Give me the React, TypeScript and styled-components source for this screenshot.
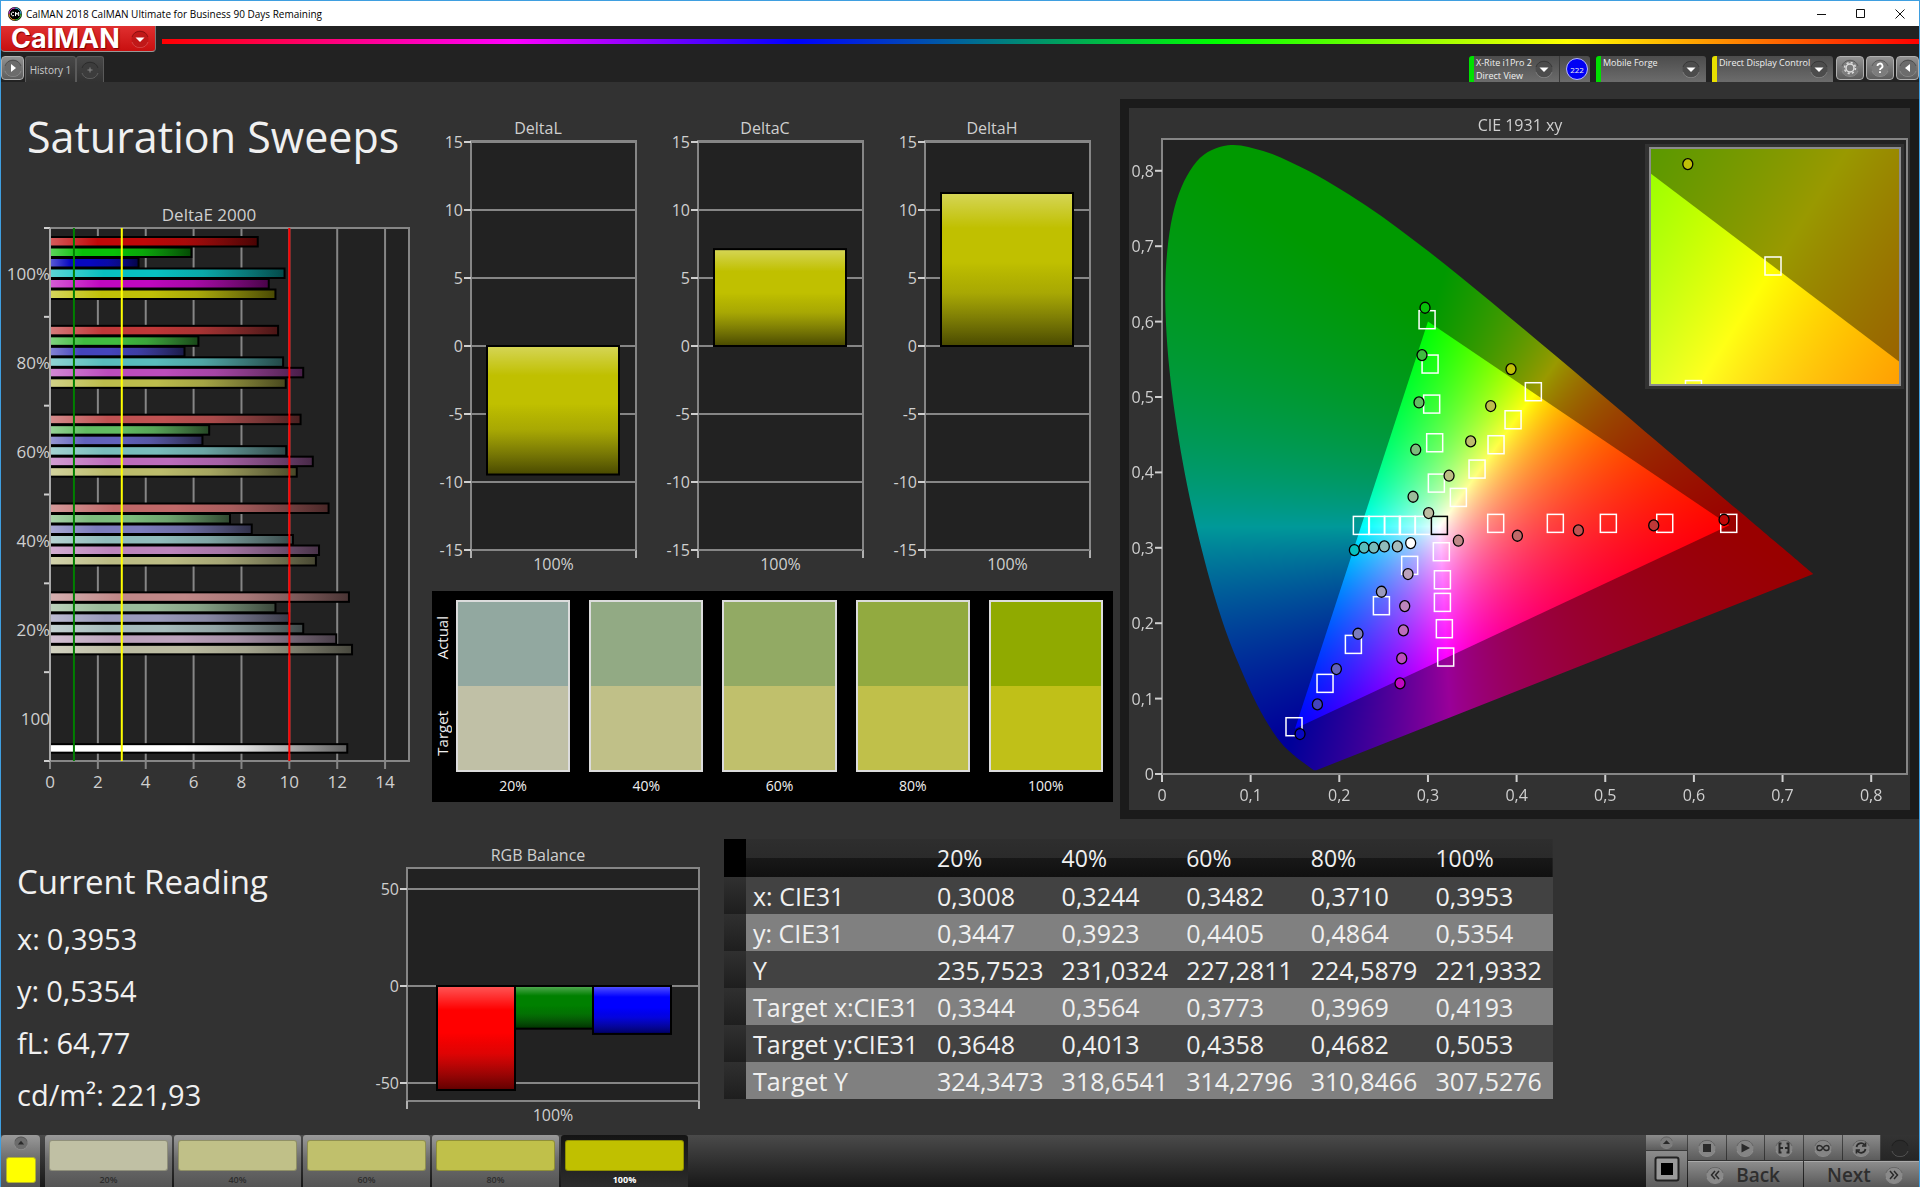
import React, { useLayoutEffect, useRef } from 'react';
import styled, { createGlobalStyle } from 'styled-components';

/* ---------- data ---------- */

const levels = ['20%', '40%', '60%', '80%', '100%'];

const deltaE = [
  { label: '100%', values: [8.68, 5.91, 3.7, 9.8, 9.14, 9.42], colors: ['#c00808', '#08c008', '#0808c0', '#08c0c0', '#c008c0', '#c0c008'] },
  { label: '80%', values: [9.53, 6.2, 5.62, 9.74, 10.58, 9.85], colors: ['#c03838', '#40bc40', '#4444bc', '#58bcbc', '#bc4cbc', '#bcbc4c'] },
  { label: '60%', values: [10.47, 6.65, 6.37, 9.87, 10.98, 10.31], colors: ['#c05252', '#62bc62', '#6262bc', '#78bcbc', '#bc6cbc', '#bcbc6c'] },
  { label: '40%', values: [11.64, 7.52, 8.43, 10.15, 11.24, 11.11], colors: ['#c06868', '#7cbc7c', '#7c7cbc', '#90bcbc', '#bc84bc', '#bcbc84'] },
  { label: '20%', values: [12.49, 9.42, 9.99, 10.58, 11.96, 12.62], colors: ['#c08888', '#9abc9a', '#9a9abc', '#a6bcbc', '#bca2bc', '#bcbca2'] },
];

const swatches = [
  { actual: '#92a8a0', target: '#c0c0a6' },
  { actual: '#92aa84', target: '#c0c088' },
  { actual: '#92aa64', target: '#c0c06c' },
  { actual: '#92aa40', target: '#c0c04a' },
  { actual: '#90aa00', target: '#c0c018' },
];

const patternColors = ['#c0c0a4', '#c0c088', '#c0c06c', '#c0c04a', '#c0c000'];

const tableRows = [
  ['x: CIE31', '0,3008', '0,3244', '0,3482', '0,3710', '0,3953'],
  ['y: CIE31', '0,3447', '0,3923', '0,4405', '0,4864', '0,5354'],
  ['Y', '235,7523', '231,0324', '227,2811', '224,5879', '221,9332'],
  ['Target x:CIE31', '0,3344', '0,3564', '0,3773', '0,3969', '0,4193'],
  ['Target y:CIE31', '0,3648', '0,4013', '0,4358', '0,4682', '0,5053'],
  ['Target Y', '324,3473', '318,6541', '314,2796', '310,8466', '307,5276'],
];

const readings = [
  ['x:', '0,3953'],
  ['y:', '0,5354'],
  ['fL:', '64,77'],
  ['cd/m²:', '221,93'],
];

type Point = [number, number];

const locus: Point[] = [
  [0.1741, 0.005], [0.1714, 0.0051], [0.1689, 0.0069], [0.1644, 0.0109], [0.1566, 0.0177],
  [0.151, 0.0227], [0.144, 0.0297], [0.1355, 0.0399], [0.1241, 0.0578], [0.1096, 0.0868],
  [0.0913, 0.1327], [0.0687, 0.2007], [0.0454, 0.295], [0.0235, 0.4127], [0.0082, 0.5384],
  [0.0039, 0.6548], [0.0139, 0.7502], [0.0389, 0.812], [0.0743, 0.8338], [0.1142, 0.8262],
  [0.1547, 0.8059], [0.1929, 0.7816], [0.2296, 0.7543], [0.2658, 0.7243], [0.3016, 0.6923],
  [0.3373, 0.6589], [0.3731, 0.6245], [0.4087, 0.5896], [0.4441, 0.5547], [0.4788, 0.5202],
  [0.5125, 0.4866], [0.5448, 0.4544], [0.5752, 0.4242], [0.6029, 0.3965], [0.627, 0.3725],
  [0.6482, 0.3514], [0.6658, 0.334], [0.6915, 0.3083], [0.7079, 0.292], [0.719, 0.2809],
  [0.726, 0.274], [0.7347, 0.2653],
];

const gamut: Point[] = [[0.64, 0.33], [0.3, 0.6], [0.15, 0.06]];

const targets: Point[] = [
  [0.299, 0.6025], [0.3024, 0.5437], [0.3042, 0.4906], [0.3076, 0.4393], [0.3095, 0.3858],
  [0.4189, 0.507], [0.396, 0.4698], [0.3768, 0.4367], [0.3554, 0.4044], [0.3343, 0.3668],
  [0.3764, 0.3324], [0.4437, 0.3324], [0.5035, 0.3324], [0.5671, 0.3324], [0.6393, 0.3324],
  [0.2249, 0.3297], [0.2422, 0.3297], [0.2599, 0.3297], [0.2768, 0.3297], [0.2945, 0.3297],
  [0.3151, 0.2948], [0.3163, 0.2576], [0.3163, 0.2276], [0.3185, 0.1927], [0.32, 0.1551],
  [0.2794, 0.2767], [0.2475, 0.2232], [0.2159, 0.1719], [0.1839, 0.1202], [0.1489, 0.0627],
];

const measured: { color: string; at: Point }[] = [
  { color: '#08c008', at: [0.2967, 0.6184] },
  { color: '#40bc40', at: [0.2933, 0.5556] },
  { color: '#62bc62', at: [0.2899, 0.4928] },
  { color: '#7cbc7c', at: [0.2862, 0.4301] },
  { color: '#9abc9a', at: [0.2832, 0.3677] },
  { color: '#c0c008', at: [0.3937, 0.537] },
  { color: '#bcbc4c', at: [0.3708, 0.488] },
  { color: '#bcbc6c', at: [0.3482, 0.4411] },
  { color: '#bcbc84', at: [0.3238, 0.3956] },
  { color: '#bcbca2', at: [0.3008, 0.3461] },
  { color: '#c08888', at: [0.3343, 0.3094] },
  { color: '#c06868', at: [0.4009, 0.316] },
  { color: '#c05252', at: [0.4697, 0.3231] },
  { color: '#c03838', at: [0.5547, 0.3297] },
  { color: '#c00808', at: [0.634, 0.3372] },
  { color: '#08c0c0', at: [0.217, 0.297] },
  { color: '#58bcbc', at: [0.2279, 0.3001] },
  { color: '#78bcbc', at: [0.2388, 0.3001] },
  { color: '#90bcbc', at: [0.2508, 0.3018] },
  { color: '#a6bcbc', at: [0.2655, 0.3018] },
  { color: '#ffffff', at: [0.2805, 0.3063] },
  { color: '#bca2bc', at: [0.2775, 0.2652] },
  { color: '#bc84bc', at: [0.2738, 0.2227] },
  { color: '#bc6cbc', at: [0.2723, 0.1905] },
  { color: '#bc4cbc', at: [0.2704, 0.1533] },
  { color: '#c008c0', at: [0.2685, 0.1202] },
  { color: '#9a9abc', at: [0.2475, 0.2417] },
  { color: '#7c7cbc', at: [0.2211, 0.186] },
  { color: '#6262bc', at: [0.1967, 0.1392] },
  { color: '#4444bc', at: [0.1753, 0.0923] },
  { color: '#0808c0', at: [0.1557, 0.053] },
];

/* ---------- shared look ---------- */

const ui = '"Open Sans", "Noto Sans", sans-serif';

const GlobalStyle = createGlobalStyle`
  * { box-sizing: border-box; }
  body { margin: 0; background: #323232; }
  button { font-family: inherit; padding: 0; margin: 0; border: 0; cursor: pointer; }
  h1, h2, dl, dd, dt { margin: 0; font-weight: 400; }
`;

const Window = styled.div`
  display: flex;
  flex-direction: column;
  min-height: 100vh;
  border: 1px solid #3f9fe0;
  border-bottom: 0;
  font-family: ${ui};
  color: #f0f0f0;
  background: #323232;
`;

/* ---------- title bar and header ---------- */

const TitleBar = styled.header`
  display: flex;
  align-items: center;
  height: 25px;
  padding-left: 7px;
  background: #fff;
  color: #000;
  font-size: 10px;
`;

const WindowTitle = styled.span`
  flex: 1;
  padding-left: 4px;
`;

const WindowButton = styled.button`
  display: grid;
  place-items: center;
  width: 39px;
  height: 24px;
  background: none;
  color: #111;
`;

const Header = styled.div`
  height: 56px;
  background: #222;
`;

const BrandRow = styled.div`
  display: flex;
  align-items: center;
  gap: 6px;
  height: 26px;
`;

const Brand = styled.button`
  display: flex;
  align-items: center;
  justify-content: space-between;
  width: 155px;
  height: 26px;
  padding: 0 6px 0 10px;
  border-radius: 0 0 4px 4px;
  border-bottom: 1px solid #999;
  border-right: 1px solid #777;
  background: linear-gradient(#e03030, #c80f0f);
  color: #fff;
  font: 700 27px/24px Inter, sans-serif;
  text-shadow: 1px 1px 1px #7a0000;
`;

const Rainbow = styled.div`
  flex: 1;
  height: 5px;
  margin-top: 4px;
  background: linear-gradient(90deg, #f00, #f0f 20%, #00f 36%, #0f0 60%, #ff0 80%, #f00);
`;

const TabRow = styled.div`
  display: flex;
  align-items: flex-end;
  justify-content: space-between;
  height: 30px;
`;

const TabGroup = styled.div`
  display: flex;
  align-items: stretch;
  height: 26px;
  gap: 1px;
`;

const Tab = styled.button<{ $width: number }>`
  width: ${(p) => p.$width}px;
  border: 1px solid #5a5a5a;
  border-bottom: 0;
  border-radius: 3px 3px 0 0;
  background: linear-gradient(#484848, #323232);
  color: #ccc;
  font-size: 10px;
  display: grid;
  place-items: center;
`;

const TabPair = styled.div`
  display: flex;
`;

const SquareButton = styled.button`
  display: grid;
  place-items: center;
  width: 28px;
  height: 24px;
  border: 1px solid #b0b0b0;
  border-radius: 4px;
  background: linear-gradient(#929292, #5c5c5c);
`;

const EdgeButton = styled(SquareButton)`
  width: 23px;
`;

const DeviceGroup = styled.div`
  display: flex;
  height: 26px;
  gap: 6px;
`;

const DeviceBar = styled.div`
  display: flex;
  align-items: flex-start;
  gap: 3px;
`;

const Device = styled.div<{ $width: number; $status: string }>`
  display: flex;
  width: ${(p) => p.$width}px;
  height: 26px;
  border-left: 5px solid ${(p) => p.$status};
  border-radius: 3px 3px 0 0;
  background: linear-gradient(#4c4c4c, #6c6c6c);
`;

const DeviceMenu = styled.button`
  display: flex;
  flex: 1;
  align-items: flex-start;
  justify-content: space-between;
  padding: 0 6px 0 2px;
  background: none;
  color: #f0f0f0;
  font-size: 9px;
  line-height: 13px;
  text-align: left;
  white-space: nowrap;
`;

const DropIcon = styled.svg`
  flex: none;
  align-self: center;
`;

const Counter = styled.span`
  display: grid;
  place-items: center;
  align-self: center;
  width: 22px;
  height: 22px;
  margin: 0 2px 0 6px;
  border: 1px solid #b8b8ff;
  border-radius: 50%;
  background: #0000f4;
  font-size: 8px;
`;

const CounterCell = styled.span`
  display: flex;
  border-left: 1px solid #3a3a3a;
`;

const ToolGroup = styled.div`
  display: flex;
  gap: 2px;
`;

/* ---------- workspace ---------- */

const Workspace = styled.main`
  flex: 1;
`;

const TopRow = styled.section`
  display: grid;
  grid-template-columns: 431fr 688fr 799fr;
  align-items: start;
`;

const BottomRow = styled.section`
  display: grid;
  grid-template-columns: 365fr 350fr 829fr 374fr;
  align-items: start;
  padding-top: 20px;
`;

const SweepColumn = styled.div`
  padding-top: 25px;
`;

const PageTitle = styled.h1`
  padding-left: 26px;
  margin-bottom: 33px;
  font-size: 43px;
  line-height: 60px;
`;

const DeltaColumn = styled.div`
  display: flex;
  flex-direction: column;
  gap: 9px;
  padding: 30px 7px 0 0;
`;

const DeltaCharts = styled.div`
  display: grid;
  grid-template-columns: repeat(3, 1fr);
`;

const Chart = styled.svg<{ $text?: number }>`
  display: block;
  width: 100%;
  height: auto;
  font-family: ${ui};
  font-size: ${(p) => p.$text ?? 16}px;
`;

const SwatchPanel = styled.div`
  display: grid;
  grid-template-columns: 24px 1fr;
  padding: 9px 10px 6px 0;
  background: #000;
`;

const SwatchSides = styled.div`
  display: flex;
  flex-direction: column;
  justify-content: space-between;
  align-items: flex-start;
  height: 172px;
  padding: 16px 0;
`;

const SideLabel = styled.span`
  writing-mode: vertical-rl;
  transform: rotate(180deg);
  font-size: 15px;
  line-height: 20px;
`;

const SwatchList = styled.div`
  display: grid;
  grid-template-columns: repeat(5, 1fr);
  gap: 19px;
`;

const SwatchItem = styled.div`
  display: flex;
  flex-direction: column;
  gap: 4px;
  font-size: 14px;
  line-height: 20px;
  text-align: center;
`;

const SwatchBox = styled.div<{ $actual: string; $target: string }>`
  height: 172px;
  border: 2px solid #dcdcdc;
  background: linear-gradient(${(p) => p.$actual} 50%, ${(p) => p.$target} 50%);
`;

const CiePanel = styled.div`
  display: grid;
  margin-top: 17px;
  border: 9px solid #1b1b1b;

  > * {
    grid-area: 1 / 1;
  }
`;

const CieCanvas = styled.canvas`
  display: block;
  width: 100%;
  height: auto;
`;

const CieOverlay = styled(Chart)`
  z-index: 1;
`;

/* ---------- readings and table ---------- */

const ReadingPanel = styled.div`
  padding: 21px 0 0 16px;
`;

const ReadingTitle = styled.h2`
  margin-bottom: 9px;
  font-size: 33px;
  line-height: 44px;
`;

const ReadingLine = styled.div`
  display: flex;
  gap: 7px;
  font-size: 29px;
  line-height: 52px;
`;

const ReadingTableWrap = styled.div`
  padding-left: 8px;
  margin-right: -8px;
`;

const ReadingTable = styled.table`
  width: 100%;
  table-layout: fixed;
  border-collapse: collapse;
  font-size: 25px;
  line-height: 36px;
  text-align: left;
  white-space: nowrap;

  th,
  td {
    padding: 0 0 0 7px;
    font-weight: 400;
  }
`;

const HandleCol = styled.col`
  width: 22px;
`;

const LabelCol = styled.col`
  width: 184px;
`;

const HeadRow = styled.tr`
  height: 38px;
  font-size: 23px;
  background: linear-gradient(#2e2e2e 0, #2a2a2a 50%, #181818 50%, #101010 100%);
`;

const CornerCell = styled.td`
  background: #000;
`;

const HandleCell = styled.td`
  background: linear-gradient(#303030, #1e1e1e);
`;

const BodyRow = styled.tr<{ $light: boolean }>`
  height: 37px;
  background: ${(p) => (p.$light ? '#808080' : '#424242')};
`;

/* ---------- footer ---------- */

const Footer = styled.footer`
  display: flex;
  justify-content: space-between;
  height: 52px;
  background: linear-gradient(#4a4a4a, #181818);
`;

const PatternBar = styled.div`
  display: flex;
  gap: 2px;
`;

const metal = 'linear-gradient(#9a9a9a, #6e6e6e 45%, #545454)';

const PatternPicker = styled.button`
  display: flex;
  flex-direction: column;
  align-items: center;
  justify-content: space-between;
  width: 39px;
  margin-right: 3px;
  padding: 1px 0 4px;
  border-radius: 4px 4px 0 0;
  background: ${metal};
`;

const PickerColor = styled.span`
  width: 30px;
  height: 26px;
  border: 1px solid #b4b42c;
  border-radius: 3px;
  background: #ff0;
`;

const PatternButton = styled.button<{ $active: boolean }>`
  display: flex;
  flex-direction: column;
  justify-content: space-between;
  width: 127px;
  padding: 5px 4px 1px;
  border-radius: 3px 3px 0 0;
  background: ${(p) => (p.$active ? 'linear-gradient(#141414, #2c2c2c)' : metal)};
  color: ${(p) => (p.$active ? '#fff' : '#2c2c2c')};
  font-size: 9px;
  font-weight: ${(p) => (p.$active ? 700 : 600)};
  line-height: 13px;
  text-align: center;
`;

const PatternColor = styled.span<{ $color: string }>`
  height: 31px;
  border: 1px solid #00000040;
  border-radius: 3px;
  background: ${(p) => p.$color};
`;

const PatternLabel = styled.span`
  align-self: center;
`;

const Transport = styled.div`
  display: grid;
  grid-template-columns: 41px 231px;
  gap: 1px;
`;

const MeterColumn = styled.div`
  display: grid;
  grid-template-rows: 15px 1fr;
  gap: 1px;
`;

const MetalButton = styled.button`
  display: grid;
  place-items: center;
  background: linear-gradient(#8c8c8c, #5c5c5c);
`;

const TransportButtons = styled.div`
  display: grid;
  grid-template-rows: 25px 1fr;
  gap: 1px;
`;

const IconRow = styled.div`
  display: grid;
  grid-template-columns: repeat(6, 1fr);
  gap: 1px;
`;

const DarkSlot = styled.button`
  display: grid;
  place-items: center;
  background: linear-gradient(#333, #262626);
`;

const NavRow = styled.div`
  display: grid;
  grid-template-columns: 1fr 1fr;
  gap: 1px;
`;

const NavButton = styled.button`
  display: flex;
  align-items: center;
  justify-content: space-between;
  padding: 0 23px 0 18px;
  border-top: 1px solid #aaa;
  background: linear-gradient(#8c8c8c, #585858);
  color: #2e2e2e;
  font-size: 19px;
  font-weight: 600;
  line-height: 24px;

  &:last-child {
    padding: 0 16px 0 23px;
  }
`;

/* ---------- small drawings ---------- */

const Knob = ({ size = 18, children, tone = '#7c7c7c' }: { size?: number; children?: React.ReactNode; tone?: string }) => (
  <DropIcon width={size} height={size} viewBox="0 0 18 18" aria-hidden="true">
    <circle cx="9" cy="9" r="8.5" fill={tone} />
    <path d="M1 12a8.5 8.5 0 0 0 16 0" fill="none" stroke="#ffffff30" />
    <path d="M1 7a8.5 8.5 0 0 1 16 0" fill="none" stroke="#00000040" />
    {children}
  </DropIcon>
);

const DownArrow = <path d="M4.500 7.500h9L9 12z" fill="#fff" />;

const AppIcon = () => (
  <svg width="14" height="14" viewBox="0 0 14 14" aria-hidden="true">
    <circle cx="7" cy="7" r="7" fill="#000" />
    <path d="M1 7a6 6 0 0 1 6-6" stroke="#e040e0" fill="none" />
    <path d="M7 1a6 6 0 0 1 6 6" stroke="#40c0f0" fill="none" />
    <path d="M13 7a6 6 0 0 1-6 6" stroke="#40d040" fill="none" />
    <path d="M7 13a6 6 0 0 1-6-6" stroke="#f0a020" fill="none" />
    <path d="M6 5.500a1.800 1.800 0 1 0 0 3M7.500 9V5.200l1.600 2.300 1.600-2.300V9" stroke="#fff" fill="none" />
  </svg>
);

const Gloss = ({ id, horizontal = false }: { id: string; horizontal?: boolean }) => (
  <linearGradient id={id} x1="0" y1="0" x2={horizontal ? 1 : 0} y2={horizontal ? 0 : 1}>
    <stop offset="0" stopColor="#fff" stopOpacity="0.340" />
    <stop offset="0.230" stopColor="#fff" stopOpacity="0" />
    <stop offset="0.450" stopColor="#000" stopOpacity="0" />
    <stop offset="0.650" stopColor="#181818" stopOpacity="0.140" />
    <stop offset="1" stopColor="#000" stopOpacity="0.620" />
  </linearGradient>
);

/* ---------- charts ---------- */

const AXIS = '#868686';
const TEXT = '#cfcfcf';

const DeltaEChart = () => {
  const left = 49;
  const right = 408;
  const top = 28;
  const bottom = 561;
  const band = (bottom - top) / 6;
  const x = (v: number) => left + (v * (right - left)) / 15;
  const barTop = (group: number, i: number) => top + band * group + 9 + i * 10.5;
  return (
    <Chart $text={17} viewBox="0 0 431 600" role="img" aria-label="DeltaE 2000 by saturation level">
      <defs>
        <Gloss id="gloss-bar" horizontal />
      </defs>
      <text x="208" y="21" fill={TEXT} textAnchor="middle">DeltaE 2000</text>
      <rect x={left} y={top} width={right - left} height={bottom - top} fill="#222" stroke={AXIS} strokeWidth="2" />
      {[0, 2, 4, 6, 8, 10, 12, 14].map((v) => (
        <g key={v}>
          <path d={`M${x(v)} ${top}V${bottom + 8}`} stroke={AXIS} strokeWidth="2" />
          <text x={x(v)} y="588" fill={TEXT} textAnchor="middle">{v}</text>
        </g>
      ))}
      {[0, 1, 2, 3, 4, 5, 6].map((i) => (
        <path key={i} d={`M43 ${top + band * i}H${left}`} stroke={TEXT} strokeWidth="2" />
      ))}
      {deltaE.map((group, g) =>
        group.values.map((v, i) => (
          <g key={`${g}-${i}`}>
            <rect x={left} y={barTop(g, i)} width={x(v) - left} height="9.500" fill={group.colors[i]} />
            <rect x={left} y={barTop(g, i)} width={x(v) - left} height="9.500" fill="url(#gloss-bar)" stroke="#000" strokeWidth="2" />
          </g>
        )),
      )}
      <rect x={left} y={barTop(5, 6)} width={x(12.42) - left} height="8.500" fill="#fff" />
      <rect x={left} y={barTop(5, 6)} width={x(12.42) - left} height="8.500" fill="url(#gloss-bar)" stroke="#000" strokeWidth="2" />
      <path d={`M${left} ${top}V${bottom}`} stroke="#a8a8a8" strokeWidth="2" />
      {[...deltaE.map((d) => d.label), '100'].map((label, i) => (
        <text key={i} x="49" y={top + band * (i + 0.5) + 8} fill={TEXT} textAnchor="end">{label}</text>
      ))}
      <path d={`M${x(1)} ${top}V${bottom}`} stroke="#008000" strokeWidth="2" />
      <path d={`M${x(3)} ${top}V${bottom}`} stroke="#ff0" strokeWidth="2" />
      <path d={`M${x(10)} ${top}V${bottom}`} stroke="#f00" strokeWidth="2" />
    </Chart>
  );
};

type Plot = { left: number; top: number; right: number; bottom: number };

type ColumnProps = {
  title: string;
  titleX: number;
  size: [number, number];
  plot: Plot;
  ticks: number[];
  zero: number;
  scale: number;
  bars: { from: number; to: number; value: number; color: string }[];
};

const ColumnChart = ({ title, titleX, size, plot, ticks, zero, scale, bars }: ColumnProps) => {
  const y = (v: number) => zero - v * scale;
  const glossId = `gloss-${title.replace(/\W/g, '')}`;
  return (
    <Chart viewBox={`0 0 ${size[0]} ${size[1]}`} role="img" aria-label={title}>
      <defs>
        <Gloss id={glossId} />
      </defs>
      <text x={titleX} y="22" fill={TEXT} textAnchor="middle">{title}</text>
      <rect x={plot.left} y={plot.top} width={plot.right - plot.left} height={plot.bottom - plot.top} fill="#222" stroke={AXIS} strokeWidth="2" />
      <path d={`M${plot.left} ${plot.bottom}v8M${plot.right} ${plot.bottom}v8`} stroke="#b0b0b0" strokeWidth="2" />
      {ticks.map((v) => (
        <g key={v}>
          <path d={`M${plot.left} ${y(v)}H${plot.right}`} stroke={AXIS} strokeWidth="2" />
          <path d={`M${plot.left - 7} ${y(v)}H${plot.left}`} stroke={TEXT} strokeWidth="2" />
          <text x={plot.left - 8} y={y(v) + 6} fill={TEXT} textAnchor="end">{v}</text>
        </g>
      ))}
      {bars.map((b) => (
        <g key={b.from}>
          <rect x={b.from} y={Math.min(y(b.value), zero)} width={b.to - b.from} height={Math.abs(b.value) * scale} fill={b.color} />
          <rect x={b.from} y={Math.min(y(b.value), zero)} width={b.to - b.from} height={Math.abs(b.value) * scale} fill={`url(#${glossId})`} stroke="#000" strokeWidth="2" />
        </g>
      ))}
      <text x={(plot.left + plot.right) / 2} y={plot.bottom + 20} fill={TEXT} textAnchor="middle">100%</text>
    </Chart>
  );
};

const DeltaChart = ({ title, value }: { title: string; value: number }) => (
  <ColumnChart
    title={title}
    titleX={106}
    size={[227, 470]}
    plot={{ left: 39, top: 29, right: 204, bottom: 438 }}
    ticks={[15, 10, 5, 0, -5, -10, -15]}
    zero={234}
    scale={13.6}
    bars={[{ from: 55, to: 187, value, color: '#c0c000' }]}
  />
);

const CIE = { width: 781, height: 702, left: 33, top: 31, right: 778, bottom: 666, sx: 886.5, sy: 754 };
const INSET = { left: 521, top: 40, right: 771, bottom: 277, cx: 644, cy: 158, x: 0.4193, y: 0.5053, sx: 3550, sy: 3386 };

const cieX = (x: number) => CIE.left + x * CIE.sx;
const cieY = (y: number) => CIE.bottom - y * CIE.sy;
const insetX = (x: number) => INSET.cx + (x - INSET.x) * INSET.sx;
const insetY = (y: number) => INSET.cy - (y - INSET.y) * INSET.sy;

/* Colour of a chromaticity at full drive: the strongest channel is 1, negatives are cut. */
const chromaColor = (x: number, y: number): [number, number, number] => {
  const z = 1 - x - y;
  const r = Math.max(0, 3.2406 * x - 1.5372 * y - 0.4986 * z);
  const g = Math.max(0, -0.9689 * x + 1.8758 * y + 0.0415 * z);
  const b = Math.max(0, 0.0557 * x - 0.204 * y + 1.057 * z);
  const m = Math.max(r, g, b, 0.0001);
  return [r / m, g / m, b / m];
};

const makeField = (w: number, h: number, toX: (px: number) => number, toY: (py: number) => number, level: number) => {
  const field = document.createElement('canvas');
  field.width = w;
  field.height = h;
  const ctx = field.getContext('2d')!;
  const image = ctx.createImageData(w, h);
  for (let py = 0; py < h; py++) {
    for (let px = 0; px < w; px++) {
      const [r, g, b] = chromaColor(toX(px), toY(py));
      const o = (py * w + px) * 4;
      image.data[o] = r * level;
      image.data[o + 1] = g * level;
      image.data[o + 2] = b * level;
      image.data[o + 3] = 255;
    }
  }
  ctx.putImageData(image, 0, 0);
  return field;
};

const tracePolygon = (ctx: CanvasRenderingContext2D, points: Point[]) => {
  ctx.beginPath();
  points.forEach(([x, y], i) => (i ? ctx.lineTo(x, y) : ctx.moveTo(x, y)));
  ctx.closePath();
};

const traceLocus = (ctx: CanvasRenderingContext2D, points: Point[]) => {
  ctx.beginPath();
  ctx.moveTo(points[0][0], points[0][1]);
  for (let i = 0; i < points.length - 1; i++) {
    const p0 = points[Math.max(0, i - 1)];
    const p1 = points[i];
    const p2 = points[i + 1];
    const p3 = points[Math.min(points.length - 1, i + 2)];
    ctx.bezierCurveTo(
      p1[0] + (p2[0] - p0[0]) / 6, p1[1] + (p2[1] - p0[1]) / 6,
      p2[0] - (p3[0] - p1[0]) / 6, p2[1] - (p3[1] - p1[1]) / 6,
      p2[0], p2[1],
    );
  }
  ctx.closePath();
};

const paintCie = (ctx: CanvasRenderingContext2D) => {
  ctx.fillStyle = '#323232';
  ctx.fillRect(0, 0, CIE.width, CIE.height);
  ctx.fillStyle = '#222';
  ctx.fillRect(CIE.left, CIE.top, CIE.right - CIE.left, CIE.bottom - CIE.top);

  const x = (px: number) => (px - CIE.left) / CIE.sx;
  const y = (py: number) => (CIE.bottom - py) / CIE.sy;
  ctx.save();
  traceLocus(ctx, locus.map(([a, b]): Point => [cieX(a), cieY(b)]));
  ctx.clip();
  ctx.drawImage(makeField(CIE.width, CIE.height, x, y, 153), 0, 0);
  tracePolygon(ctx, gamut.map(([a, b]): Point => [cieX(a), cieY(b)]));
  ctx.clip();
  ctx.drawImage(makeField(CIE.width, CIE.height, x, y, 255), 0, 0);
  ctx.restore();

  const w = INSET.right - INSET.left;
  const h = INSET.bottom - INSET.top;
  const ix = (px: number) => INSET.x + (px + INSET.left - INSET.cx) / INSET.sx;
  const iy = (py: number) => INSET.y - (py + INSET.top - INSET.cy) / INSET.sy;
  ctx.fillStyle = '#323232';
  ctx.fillRect(INSET.left - 5, INSET.top - 4, w + 9, h + 8);
  ctx.save();
  ctx.drawImage(makeField(w, h, ix, iy, 153), INSET.left, INSET.top);
  ctx.beginPath();
  ctx.rect(INSET.left, INSET.top, w, h);
  ctx.clip();
  tracePolygon(ctx, gamut.map(([a, b]): Point => [insetX(a), insetY(b)]));
  ctx.clip();
  ctx.drawImage(makeField(w, h, ix, iy, 255), INSET.left, INSET.top);
  ctx.restore();
};

const TargetMark = ({ x, y, color = '#fff' }: { x: number; y: number; color?: string }) => (
  <rect x={x - 8} y={y - 9} width="16" height="18" fill="none" stroke={color} strokeWidth="1.500" />
);

const MeasureMark = ({ x, y, color }: { x: number; y: number; color: string }) => (
  <ellipse cx={x} cy={y} rx="5" ry="5.500" fill={color} stroke="#000" strokeWidth="1.300" />
);

const CieChart = () => {
  const canvas = useRef<HTMLCanvasElement>(null);
  useLayoutEffect(() => {
    const ctx = canvas.current?.getContext('2d');
    if (ctx) paintCie(ctx);
  }, []);
  const ticks = [0, 1, 2, 3, 4, 5, 6, 7, 8];
  const tickLabel = (t: number) => (t ? `0,${t}` : '0');
  return (
    <CiePanel>
      <CieCanvas ref={canvas} width={CIE.width} height={CIE.height} />
      <CieOverlay viewBox={`0 0 ${CIE.width} ${CIE.height}`} role="img" aria-label="CIE 1931 xy chromaticity diagram">
        <defs>
          <clipPath id="inset-clip">
            <rect x={INSET.left} y={INSET.top} width={INSET.right - INSET.left} height={INSET.bottom - INSET.top} />
          </clipPath>
        </defs>
        <text x="391" y="23" fill={TEXT} textAnchor="middle">CIE 1931 xy</text>
        <rect x={CIE.left} y={CIE.top} width={CIE.right - CIE.left} height={CIE.bottom - CIE.top} fill="none" stroke={AXIS} strokeWidth="2" />
        {ticks.map((t) => (
          <g key={t}>
            <path d={`M${cieX(t / 10)} ${CIE.bottom + 1}v7`} stroke={TEXT} strokeWidth="2" />
            <path d={`M${CIE.left - 7} ${cieY(t / 10)}h7`} stroke={TEXT} strokeWidth="2" />
            <text x={cieX(t / 10)} y="693" fill={TEXT} textAnchor="middle">{tickLabel(t)}</text>
            <text x={CIE.left - 8} y={cieY(t / 10) + 6} fill={TEXT} textAnchor="end">{tickLabel(t)}</text>
          </g>
        ))}
        {targets.map(([x, y]) => (
          <TargetMark key={`${x} ${y}`} x={cieX(x)} y={cieY(y)} />
        ))}
        <TargetMark x={cieX(0.3129)} y={cieY(0.3297)} color="#000" />
        {measured.map((m) => (
          <MeasureMark key={m.color} x={cieX(m.at[0])} y={cieY(m.at[1])} color={m.color} />
        ))}
        <g clipPath="url(#inset-clip)">
          <TargetMark x={insetX(0.4193)} y={insetY(0.5053)} />
          <TargetMark x={insetX(0.3969)} y={insetY(0.4688)} />
          <MeasureMark x={insetX(0.3953)} y={insetY(0.5354)} color="#c0c008" />
        </g>
        <rect x={INSET.left} y={INSET.top} width={INSET.right - INSET.left} height={INSET.bottom - INSET.top} fill="none" stroke="#8c8c8c" strokeWidth="2" />
      </CieOverlay>
    </CiePanel>
  );
};

/* ---------- page ---------- */

const ink = '#2a2a2a';

const transportIcons: { name: string; icon: React.ReactNode }[] = [
  { name: 'Stop', icon: <path d="M5 5h8v8H5z" fill={ink} /> },
  { name: 'Play', icon: <path d="M5.500 4.500L14 9l-8.500 4.500z" fill={ink} /> },
  { name: 'Step', icon: <path d="M6.500 4.500H4.500v9h2M11.500 4.500h2v9h-2M5 9h3M10 9h3" fill="none" stroke={ink} strokeWidth="2" /> },
  {
    name: 'Loop',
    icon: <path d="M9 9C7.500 6.800 6.500 6.500 5.500 6.500a2.500 2.500 0 0 0 0 5C6.500 11.500 7.500 11.200 9 9s2.500-2.500 3.500-2.500a2.500 2.500 0 0 1 0 5C11.500 11.500 10.500 11.200 9 9z" fill="none" stroke={ink} strokeWidth="1.400" />,
  },
  {
    name: 'Refresh',
    icon: <path d="M4.500 8a4.500 4.500 0 0 1 8-2M13.500 3.500v3.500H10M13.500 10a4.500 4.500 0 0 1-8 2M4.500 14.500V11H8" fill="none" stroke={ink} strokeWidth="1.700" />,
  },
];

const App = () => (
  <>
    <GlobalStyle />
    <Window>
      <TitleBar>
        <AppIcon />
        <WindowTitle>CalMAN 2018 CalMAN Ultimate for Business 90 Days Remaining</WindowTitle>
        <WindowButton aria-label="Minimize">
          <svg width="10" height="10" viewBox="0 0 10 10"><path d="M0 5.500h9" stroke="currentColor" /></svg>
        </WindowButton>
        <WindowButton aria-label="Maximize">
          <svg width="10" height="10" viewBox="0 0 10 10"><path d="M.5.5h8v8h-8z" fill="none" stroke="currentColor" /></svg>
        </WindowButton>
        <WindowButton aria-label="Close">
          <svg width="10" height="10" viewBox="0 0 10 10"><path d="M.5.500l9 9M9.500.5l-9 9" stroke="currentColor" /></svg>
        </WindowButton>
      </TitleBar>

      <Header>
        <BrandRow>
          <Brand aria-label="CalMAN menu">
            CalMAN
            <Knob tone="#c01818">{DownArrow}</Knob>
          </Brand>
          <Rainbow />
        </BrandRow>
        <TabRow>
          <TabGroup>
            <EdgeButton aria-label="Show side panel">
              <Knob tone="#6c6c6c"><path d="M7 5l5 4-5 4z" fill="#fff" /></Knob>
            </EdgeButton>
            <TabPair>
              <Tab $width={51}>History 1</Tab>
              <Tab $width={28} aria-label="Add history tab">
                <Knob tone="#3c3c3c"><path d="M9 6.500v5M6.500 9h5" stroke="#888" /></Knob>
              </Tab>
            </TabPair>
          </TabGroup>
          <DeviceBar>
            <DeviceGroup>
              <Device $width={121} $status="#00e000">
                <DeviceMenu>
                  <span>X-Rite i1Pro 2<br />Direct View</span>
                  <Knob tone="#4c4c4c">{DownArrow}</Knob>
                </DeviceMenu>
                <CounterCell><Counter>222</Counter></CounterCell>
              </Device>
              <Device $width={110} $status="#00e000">
                <DeviceMenu>
                  <span>Mobile Forge</span>
                  <Knob tone="#4c4c4c">{DownArrow}</Knob>
                </DeviceMenu>
              </Device>
              <Device $width={121} $status="#e8e000">
                <DeviceMenu>
                  <span>Direct Display Control</span>
                  <Knob tone="#4c4c4c">{DownArrow}</Knob>
                </DeviceMenu>
              </Device>
            </DeviceGroup>
            <ToolGroup>
              <SquareButton aria-label="Settings">
                <Knob>
                  <circle cx="9" cy="9" r="4" fill="none" stroke="#ddd" strokeWidth="1.500" />
                  <circle cx="9" cy="9" r="5.500" fill="none" stroke="#ddd" strokeWidth="1.500" strokeDasharray="2.160 2.160" />
                </Knob>
              </SquareButton>
              <SquareButton aria-label="Help">
                <Knob>
                  <path d="M6.500 7a2.500 2.500 0 1 1 3.700 2.200C9.300 9.700 9 10 9 11M9 12.300v1.700" fill="none" stroke="#fff" strokeWidth="1.800" />
                </Knob>
              </SquareButton>
              <EdgeButton aria-label="Hide device panel">
                <Knob tone="#6c6c6c"><path d="M11 5l-5 4 5 4z" fill="#fff" /></Knob>
              </EdgeButton>
            </ToolGroup>
          </DeviceBar>
        </TabRow>
      </Header>

      <Workspace>
        <TopRow>
          <SweepColumn>
            <PageTitle>Saturation Sweeps</PageTitle>
            <DeltaEChart />
          </SweepColumn>
          <DeltaColumn>
            <DeltaCharts>
              <DeltaChart title="DeltaL" value={-9.45} />
              <DeltaChart title="DeltaC" value={7.12} />
              <DeltaChart title="DeltaH" value={11.25} />
            </DeltaCharts>
            <SwatchPanel>
              <SwatchSides>
                <SideLabel>Actual</SideLabel>
                <SideLabel>Target</SideLabel>
              </SwatchSides>
              <SwatchList>
                {swatches.map((s, i) => (
                  <SwatchItem key={levels[i]}>
                    <SwatchBox $actual={s.actual} $target={s.target} />
                    {levels[i]}
                  </SwatchItem>
                ))}
              </SwatchList>
            </SwatchPanel>
          </DeltaColumn>
          <CieChart />
        </TopRow>

        <BottomRow>
          <ReadingPanel>
            <ReadingTitle>Current Reading</ReadingTitle>
            <dl>
              {readings.map(([name, value]) => (
                <ReadingLine key={name}>
                  <dt>{name}</dt>
                  <dd>{value}</dd>
                </ReadingLine>
              ))}
            </dl>
          </ReadingPanel>
          <ColumnChart
            title="RGB Balance"
            titleX={172}
            size={[350, 290]}
            plot={{ left: 41, top: 29, right: 333, bottom: 262 }}
            ticks={[50, 0, -50]}
            zero={147}
            scale={1.94}
            bars={[
              { from: 71, to: 149, value: -53.6, color: '#ff0000' },
              { from: 149, to: 227, value: -22, color: '#008000' },
              { from: 227, to: 305, value: -24.7, color: '#0000ff' },
            ]}
          />
          <ReadingTableWrap>
            <ReadingTable>
              <colgroup>
                <HandleCol />
                <LabelCol />
                {levels.map((l) => <col key={l} />)}
              </colgroup>
              <thead>
                <HeadRow>
                  <CornerCell />
                  <td />
                  {levels.map((l) => <th key={l} scope="col">{l}</th>)}
                </HeadRow>
              </thead>
              <tbody>
                {tableRows.map(([name, ...cells], i) => (
                  <BodyRow key={name} $light={i % 2 === 1}>
                    <HandleCell />
                    <th scope="row">{name}</th>
                    {cells.map((c) => <td key={c}>{c}</td>)}
                  </BodyRow>
                ))}
              </tbody>
            </ReadingTable>
          </ReadingTableWrap>
        </BottomRow>
      </Workspace>

      <Footer>
        <PatternBar>
          <PatternPicker aria-label="Choose pattern colour">
            <Knob size={14} tone="#6c6c6c"><path d="M5 11l4-5 4 5z" fill={ink} /></Knob>
            <PickerColor />
          </PatternPicker>
          {levels.map((l, i) => (
            <PatternButton key={l} $active={i === 4}>
              <PatternColor $color={patternColors[i]} />
              <PatternLabel>{l}</PatternLabel>
            </PatternButton>
          ))}
        </PatternBar>
        <Transport>
          <MeterColumn>
            <MetalButton aria-label="Expand meter panel">
              <Knob size={13}><path d="M4 11l5-5 5 5z" fill={ink} /></Knob>
            </MetalButton>
            <MetalButton aria-label="Meter window">
              <svg width="26" height="26" viewBox="0 0 26 26" aria-hidden="true">
                <rect x="1.500" y="1.500" width="23" height="23" rx="2" fill="#999" stroke="#222" strokeWidth="2" />
                <path d="M7 7h12v12H7z" fill="#000" />
              </svg>
            </MetalButton>
          </MeterColumn>
          <TransportButtons>
            <IconRow>
              {transportIcons.map((t) => (
                <MetalButton key={t.name} aria-label={t.name}>
                  <Knob tone="#858585">{t.icon}</Knob>
                </MetalButton>
              ))}
              <DarkSlot aria-label="Record" disabled>
                <Knob tone="#2a2a2a" />
              </DarkSlot>
            </IconRow>
            <NavRow>
              <NavButton>
                <Knob tone="#8a8a8a"><path d="M9 5L5.500 9 9 13M13 5L9.500 9l3.500 4" fill="none" stroke={ink} strokeWidth="1.500" /></Knob>
                Back
              </NavButton>
              <NavButton>
                Next
                <Knob tone="#8a8a8a"><path d="M5 5l3.500 4L5 13M9 5l3.500 4L9 13" fill="none" stroke={ink} strokeWidth="1.500" /></Knob>
              </NavButton>
            </NavRow>
          </TransportButtons>
        </Transport>
      </Footer>
    </Window>
  </>
);

export default App;
